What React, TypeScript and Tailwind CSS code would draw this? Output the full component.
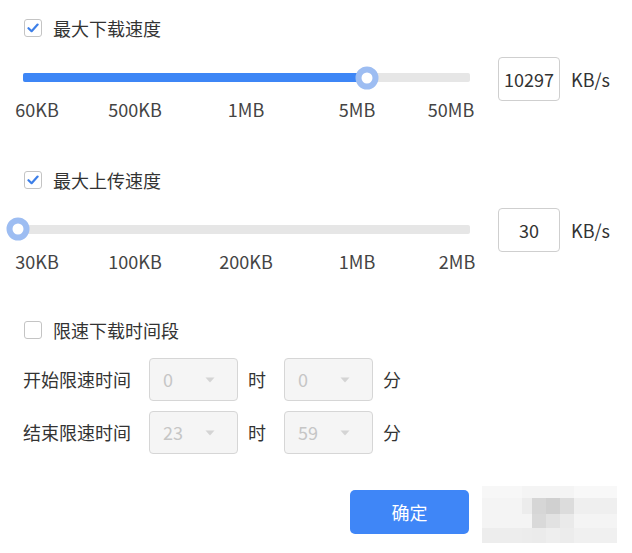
import { ReactNode } from "react";

const FONT = { fontFamily: '"Noto Sans CJK SC", "Liberation Sans", sans-serif' };

function Check({ checked, label }: { checked: boolean; label: string }) {
  return (
    <div className="flex items-center h-5 pl-[24px]">
      <span className="w-[18px] h-[18px] rounded-[3px] border border-[#c4c4c4] bg-white flex items-center justify-center">
        {checked ? (
          <svg width="12" height="10" viewBox="0 0 12 10">
            <path d="M1.5 5.2 L4.6 8.2 L10.6 1.6" fill="none" stroke="#3d7fe8" strokeWidth="2.2" strokeLinecap="round" strokeLinejoin="round" />
          </svg>
        ) : null}
      </span>
      <span className="ml-[11px] text-[18px] text-[#333] leading-5">{label}</span>
    </div>
  );
}

function SpeedSlider({ pct, value, labels, widths, wrapH }: { pct: number; value: string; labels: string[]; widths: number[]; wrapH: string }) {
  return (
    <div className="flex items-start">
      <div className="flex flex-col w-[470px] shrink-0">
        <div className={`${wrapH} flex items-center pl-[23px]`}>
          <div className="relative w-[447px] h-[9px] rounded-[2px] bg-[#e6e6e6]">
            <div className="h-full rounded-[2px] bg-[#3d86f6]" style={{ width: `${Math.max(pct, 0)}%` }} />
            <div
              className="absolute top-1/2 w-[23px] h-[23px] -translate-x-1/2 -translate-y-1/2 rounded-full bg-white border-[6px] border-[#9dbdf2]"
              style={{ left: `${pct}%` }}
            />
          </div>
        </div>
        <div className="flex h-[22px] text-[18px] leading-[22px] text-[#444] whitespace-nowrap">
          {labels.map((l, i) => (
            <span key={l} className="text-center shrink-0" style={{ width: widths[i] }}>
              {l}
            </span>
          ))}
        </div>
      </div>
      <div className="ml-[28px] w-[62px] h-[44px] shrink-0 rounded-[4px] border border-[#cfcfcf] flex items-center justify-center text-[18px] text-[#333]">
        {value}
      </div>
      <span className="ml-[11px] h-[44px] flex items-center text-[18px] text-[#333]">KB/s</span>
    </div>
  );
}

function Select({ value }: { value: string }) {
  return (
    <div className="w-[89px] h-[43px] rounded-[4px] border border-[#d6d6d6] bg-[#f5f5f5] flex items-center pl-[13px] pr-[22px] justify-between text-[18px] text-[#c6c6c6]">
      <span>{value}</span>
      <svg width="10" height="6" viewBox="0 0 10 6">
        <path d="M0.5 0.5 L9.5 0.5 L5 5.5 Z" fill="#d4d4d4" />
      </svg>
    </div>
  );
}

function TimeRow({ label, h, m }: { label: string; h: string; m: string }) {
  return (
    <div className="flex items-center pl-[23px] text-[18px] text-[#333]">
      <span className="w-[107px] whitespace-nowrap">{label}</span>
      <div className="ml-[19px]"><Select value={h} /></div>
      <span className="ml-[10px]">时</span>
      <div className="ml-[18px]"><Select value={m} /></div>
      <span className="ml-[10px]">分</span>
    </div>
  );
}

function Section({ children, className }: { children: ReactNode; className?: string }) {
  return <div className={className}>{children}</div>;
}

export default function App() {
  return (
    <div className="w-[632px] h-[553px] bg-white overflow-hidden" style={FONT}>
      <Section className="pt-[18px]">
        <Check checked label="最大下载速度" />
        <div className="mt-[19px]">
          <SpeedSlider
            pct={77}
            value="10297"
            wrapH="h-[41px]"
            labels={["60KB", "500KB", "1MB", "5MB", "50MB"]}
            widths={[74, 122, 100, 122, 66]}
          />
        </div>
      </Section>

      <Section className="mt-[50px]">
        <Check checked label="最大上传速度" />
        <div className="mt-[18px]">
          <SpeedSlider
            pct={-1.1}
            value="30"
            wrapH="h-[42px]"
            labels={["30KB", "100KB", "200KB", "1MB", "2MB"]}
            widths={[74, 122, 100, 122, 78]}
          />
        </div>
      </Section>

      <Section className="mt-[48px]">
        <Check checked={false} label="限速下载时间段" />
        <div className="mt-[18px] flex flex-col gap-[10px]">
          <TimeRow label="开始限速时间" h="0" m="0" />
          <TimeRow label="结束限速时间" h="23" m="59" />
        </div>
      </Section>

      <div className="mt-[32px] flex items-start pl-[350px]">
        <button className="mt-[4px] w-[119px] h-[44px] rounded-[5px] bg-[#3f86f7] text-white text-[18px]">确定</button>
        <div className="ml-[13px] w-[135px] h-[57px] bg-[#f4f4f4] grid grid-cols-[40px_10px_14px_14px_14px_43px] grid-rows-[12px_16px_14px_15px]">
          <div className="bg-[#f7f7f7]" /><div /><div /><div /><div /><div className="bg-[#f8f8f8]" />
          <div /><div className="bg-[#ececec]" /><div className="bg-[#d6d6d6]" /><div className="bg-[#d0d0d0]" /><div className="bg-[#dcdcdc]" /><div className="bg-[#efefef]" />
          <div /><div /><div className="bg-[#d9d9d9]" /><div className="bg-[#e2e2e2]" /><div className="bg-[#eaeaea]" /><div />
          <div className="bg-[#ededed]" /><div className="bg-[#ececec]" /><div className="bg-[#ebebeb]" /><div className="bg-[#eeeeee]" /><div className="bg-[#ececec]" /><div className="bg-[#f0f0f0]" />
        </div>
      </div>
    </div>
  );
}
